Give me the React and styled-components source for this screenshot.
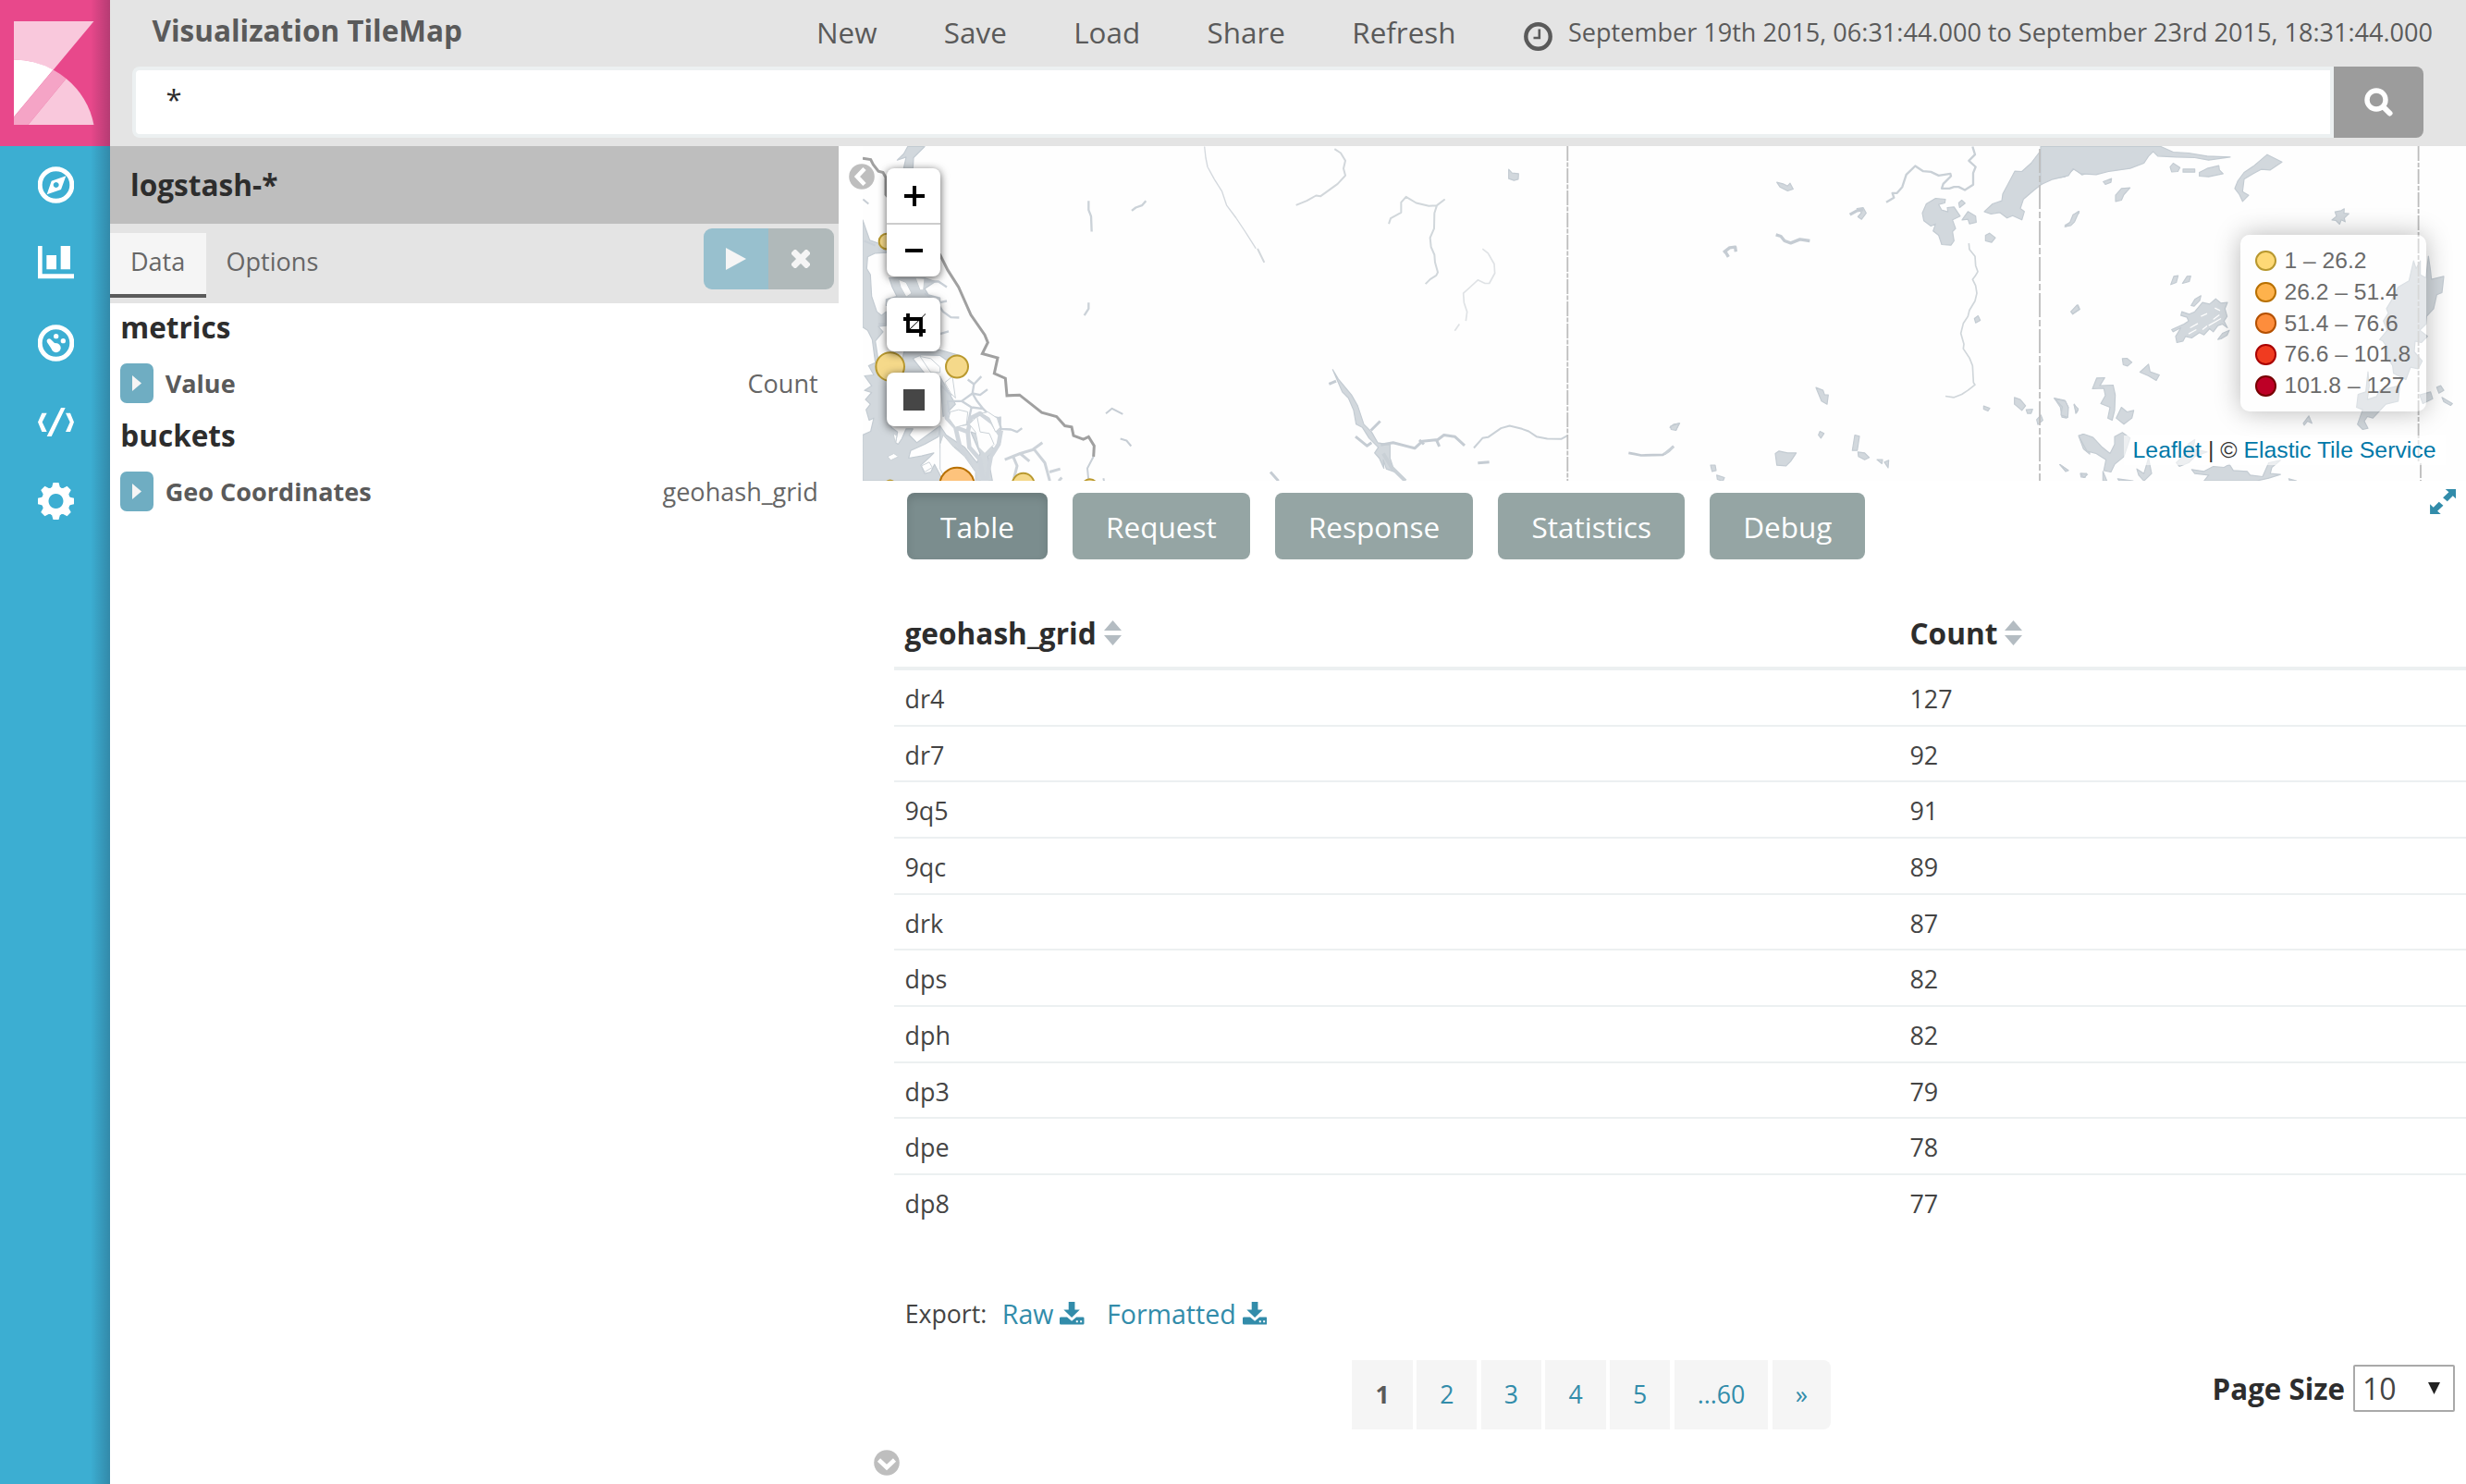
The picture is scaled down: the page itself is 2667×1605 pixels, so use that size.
import React from 'react';
import styled, { createGlobalStyle } from 'styled-components';

const Global = createGlobalStyle`
  *, *::before, *::after { box-sizing: border-box; }
  body { margin: 0; background: #fff; font-family: "Open Sans", sans-serif; color: #444; overflow: hidden; }
  button { font: inherit; border: 0; margin: 0; padding: 0; cursor: pointer; }
  a { text-decoration: none; }
  svg { display: block; flex: none; }
`;

const Page = styled.div`
  display: grid;
  grid-template-columns: 119px 1fr;
  width: 2667px;
  height: 1605px;
`;

/* ---------- global navigation ---------- */

const Nav = styled.nav`
  position: relative;
  background: #3caed2;
  &::after {
    content: "";
    position: absolute;
    inset: 0 0 0 auto;
    width: 21px;
    background: linear-gradient(to right, rgba(0, 0, 0, 0), rgba(20, 20, 40, 0.12) 50%, rgba(20, 20, 40, 0.24));
  }
`;
const LogoBox = styled.div`
  height: 157.5px;
  background: #e8488b;
`;
const NavItem = styled.a`
  display: flex;
  align-items: center;
  justify-content: center;
  height: 85.5px;
  padding-left: 2px;
`;

/* ---------- top bar ---------- */

const Main = styled.div`
  display: grid;
  grid-template-rows: 157.5px 1fr;
  min-width: 0;
`;
const Header = styled.header`
  background: #e4e4e4;
`;
const TopRow = styled.div`
  display: flex;
  align-items: center;
  height: 70px;
  padding: 0 36px 0 45.5px;
`;
const Title = styled.h1`
  margin: 0;
  padding-bottom: 4px;
  font-size: 31.5px;
  line-height: 44px;
  font-weight: 700;
  color: #5a5a5a;
`;
const Menu = styled.div`
  display: flex;
  align-items: center;
  gap: 72.4px;
  margin-left: auto;
  font-size: 31.4px;
  line-height: 44px;
  color: #5a5a5a;
`;
const TimeRange = styled.div`
  display: flex;
  align-items: center;
  gap: 17.5px;
  margin-left: 73px;
  font-size: 27.05px;
  line-height: 36px;
  color: #5a5a5a;
  svg { position: relative; top: 4px; }
`;
const SearchRow = styled.div`
  display: flex;
  height: 76.7px;
  margin: 2px 46px 0 23.6px;
`;
const SearchInput = styled.input`
  flex: 1;
  min-width: 0;
  border: 4px solid #ecf0f1;
  border-radius: 8px 0 0 8px;
  background: #fff;
  padding: 0 30px 6px 33px;
  font: 400 31px "Open Sans", sans-serif;
  color: #2d2d2d;
  outline: 0;
`;
const SearchButton = styled.button`
  display: flex;
  align-items: center;
  justify-content: center;
  width: 97px;
  border-radius: 0 8px 8px 0;
  background: #9c9c9c;
`;

/* ---------- editor sidebar ---------- */

const Body = styled.div`
  display: grid;
  grid-template-columns: 787.7px 1fr;
  min-height: 0;
`;
const IndexName = styled.div`
  display: flex;
  align-items: center;
  height: 84.5px;
  padding: 0 0 1px 22px;
  background: #bebebe;
  font-size: 31.6px;
  font-weight: 700;
  color: #2d2d2d;
`;
const TabBar = styled.div`
  display: flex;
  align-items: flex-start;
  height: 86px;
  background: #e4e4e4;
`;
const Tab = styled.a`
  height: 70px;
  margin-top: 9.5px;
  padding: 13px 22.4px 0 21.9px;
  border-bottom: 4px solid ${(p) => (p.$active ? '#5a5a5a' : 'transparent')};
  background: ${(p) => (p.$active ? '#f5f5f5' : 'transparent')};
  font-size: 27.05px;
  line-height: 36px;
  color: #666;
`;
const RunGroup = styled.div`
  display: flex;
  height: 66px;
  margin: 4.5px 5px 0 auto;
  border-radius: 9px;
  overflow: hidden;
`;
const RunButton = styled.button`
  display: flex;
  align-items: center;
  justify-content: center;
  width: 70.5px;
  background: ${(p) => p.$bg};
`;
const Aggs = styled.div`
  padding: 4.3px 22px 0 11.3px;
`;
const AggTitle = styled.h2`
  margin: 0;
  height: 44.4px;
  font-size: 31.5px;
  line-height: 44.4px;
  font-weight: 700;
  color: #2d2d2d;
`;
const AggRow = styled.div`
  display: flex;
  align-items: center;
  height: 72.4px;
  padding-top: 4px;
  font-size: 27.05px;
  color: #5a5a5a;
`;
const Expand = styled.button`
  display: flex;
  align-items: center;
  justify-content: center;
  width: 36px;
  height: 43px;
  margin-right: 12.4px;
  border-radius: 7px;
  background: #6fadc2;
`;
const AggName = styled.span`
  font-weight: 700;
`;
const AggDetail = styled.span`
  margin-left: auto;
  color: #666;
`;

/* ---------- map ---------- */

const Content = styled.main`
  position: relative;
  min-width: 0;
`;
const MapPane = styled.div`
  position: relative;
  height: 362.3px;
  margin-left: 26.3px;
  overflow: hidden;
`;
const Collapse = styled.button`
  position: absolute;
  z-index: 2;
  left: ${(p) => p.$left}px;
  top: ${(p) => p.$top}px;
  background: none;
`;
const Controls = styled.div`
  position: absolute;
  left: 25.7px;
  top: 24.8px;
  display: flex;
  flex-direction: column;
  gap: 22.4px;
`;
const ControlBox = styled.div`
  width: 58.5px;
  border-radius: 8px;
  background: #fff;
  box-shadow: 0 2px 10px rgba(0, 0, 0, 0.65);
`;
const Control = styled.button`
  display: flex;
  align-items: center;
  justify-content: center;
  width: 58.5px;
  height: 58.5px;
  padding: 1px 0 0 2px;
  background: none;
  & + & { border-top: 2px solid #ccc; padding-top: 0; }
`;
const Legend = styled.div`
  position: absolute;
  right: 43.5px;
  top: 96.5px;
  width: 200.5px;
  height: 191px;
  padding: 11.2px 16px;
  border-radius: 10px;
  background: rgba(255, 255, 255, 0.4);
  box-shadow: 0 0 28px rgba(0, 0, 0, 0.28);
  font: 24.6px "Liberation Sans", Arial, sans-serif;
  color: #6a6a6a;
`;
const LegendItem = styled.div`
  display: flex;
  align-items: center;
  gap: 9px;
  height: 33.8px;
  white-space: nowrap;
`;
const Swatch = styled.i`
  width: 22.5px;
  height: 22.5px;
  border-radius: 50%;
  border: 2px solid ${(p) => p.$line};
  background: ${(p) => p.$fill};
`;
const Attribution = styled.div`
  position: absolute;
  right: 22.5px;
  bottom: 16.5px;
  padding: 0 10px;
  background: rgba(255, 255, 255, 0.6);
  font: 24.8px/32px "Liberation Sans", Arial, sans-serif;
  color: #333;
  white-space: nowrap;
  a { color: #0078a8; }
`;
const Fullscreen = styled.a`
  position: absolute;
  right: 11px;
  top: 371.5px;
`;

/* ---------- spy panel ---------- */

const SpyModes = styled.div`
  display: flex;
  gap: 27.2px;
  padding: 13.4px 0 0 74.4px;
`;
const SpyButton = styled.button`
  height: 72.3px;
  padding: 0 36px 0.5px;
  border-radius: 8px;
  font-size: 31.5px;
  color: #fff;
  background: ${(p) => (p.$active ? '#7b8d8e' : '#95a5a4')};
  box-shadow: ${(p) => (p.$active ? 'inset 0 5px 10px rgba(0, 0, 0, 0.125)' : 'none')};
`;
const Table = styled.div`
  margin: 57px 0 0 60.8px;
`;
const Cells = styled.div`
  display: grid;
  grid-template-columns: 1087px 1fr;
  align-items: center;
  padding-left: 11px;
`;
const HeadRow = styled(Cells)`
  height: 62.4px;
  padding-bottom: 14px;
  border-bottom: 4px solid #ecf0f1;
  font-size: 31.6px;
  line-height: 44px;
  font-weight: 700;
  color: #2d2d2d;
`;
const HeadCell = styled.div`
  display: flex;
  align-items: center;
  gap: 8px;
`;
const Row = styled(Cells)`
  height: 60.7px;
  padding-top: 2.5px;
  border-bottom: 2px solid ${(p) => (p.$last ? 'transparent' : '#ecf0f1')};
  font-size: 26.9px;
  color: #444;
`;
const Export = styled.div`
  display: flex;
  align-items: center;
  height: 40px;
  margin: 68.7px 0 0 72px;
  font-size: 26.7px;
  color: #444;
`;
const ExportLink = styled.a`
  display: flex;
  align-items: center;
  gap: 7px;
  margin-left: ${(p) => p.$gap}px;
  font-size: 28.57px;
  line-height: 39px;
  color: #328caa;
`;
const Footer = styled.div`
  display: flex;
  align-items: flex-start;
  margin-top: 31px;
  padding: 0 12px 0 555.8px;
`;
const Pager = styled.div`
  display: flex;
  gap: 4.4px;
`;
const PageLink = styled.a`
  padding: 0 25px;
  height: 74.3px;
  border-radius: ${(p) => (p.$last ? '0 8px 8px 0' : '0')};
  background: #f5f5f5;
  font-size: 26.7px;
  line-height: 73px;
  font-weight: ${(p) => (p.$current ? 700 : 400)};
  color: ${(p) => (p.$current ? '#5a5a5a' : '#328caa')};
`;
const PageSize = styled.div`
  display: flex;
  align-items: center;
  gap: 9px;
  height: 51px;
  margin: 5px 0 0 auto;
  font-size: 31.3px;
  font-weight: 700;
  color: #2d2d2d;
`;
const Select = styled.div`
  display: flex;
  align-items: center;
  justify-content: space-between;
  width: 110px;
  height: 51px;
  padding: 0 14px 0 8px;
  border: 2px solid #a9a9a9;
  border-radius: 2px;
  font-size: 32px;
  font-weight: 400;
  color: #444;
`;

/* ---------- drawings ---------- */

const Logo = () => (
  <svg width="119" height="157.5" viewBox="0 0 119 157.5">
    <path fill="#f9c8dc" d="M15 23H101.5L57.5 75.8A87.5 87.5 0 0 0 15 64.6Z" />
    <path fill="#fff" d="M15 64.6A87.5 87.5 0 0 1 57.5 75.5L15 126.5Z" />
    <path fill="#f5a4c6" d="M57.5 75.5A87.5 87.5 0 0 1 71.6 85L30.5 135H15V126.5Z" />
    <path fill="#f9c8dc" d="M71.6 85A87.5 87.5 0 0 1 101.5 135H30.5Z" />
  </svg>
);

const Compass = () => (
  <svg width="39" height="40" viewBox="123 90 117 120">
    <circle cx="181.5" cy="150" r="52" fill="none" stroke="#fff" strokeWidth="15" />
    <path fill="#fff" fillRule="evenodd" d="M214 121L198 165L152 181L167 137ZM182 141a9 9 0 1 0 0.1 0Z" />
  </svg>
);
const Bars = () => (
  <svg width="39" height="40" viewBox="123 347 117 120" fill="#fff">
    <path d="M123 347h14v91h103v15H123ZM151 377h32v46h-32ZM197 347h31v76h-31Z" />
  </svg>
);
const Gauge = () => (
  <svg width="39" height="40" viewBox="123 603 117 120" fill="#fff">
    <circle cx="181.5" cy="663" r="52" fill="none" stroke="#fff" strokeWidth="15" />
    <circle cx="182" cy="641" r="8" />
    <circle cx="205" cy="656" r="8" />
    <circle cx="182" cy="679" r="15" />
    <path d="M153 661A8 8 0 0 1 164 650L177 663L190 667L168 683Z" />
  </svg>
);
const Code = () => (
  <svg width="39" height="31" viewBox="123 873 117 93" fill="#fff">
    <path d="M136 890h16l-15 29.500l15 31.500h-16l-13-31.500ZM198 873h14l-45 93h-15ZM213 890h15l12 29.500l-12 31.500h-15l14-31.500Z" />
  </svg>
);
const Gear = () => (
  <svg width="39" height="40" viewBox="-58.5 -60 117 120" fill="#fff">
    <path fillRule="evenodd" d="M0 -46a46 46 0 1 0 0.1 0ZM0 -24a24 24 0 1 1 -0.1 0Z" />
    {[0, 45, 90, 135, 180, 225, 270, 315].map((a) => (
      <path key={a} transform={`rotate(${a})`} d="M-9 -60H9L13 -46L22 -38H-22L-13 -46Z" />
    ))}
  </svg>
);
const Clock = () => (
  <svg width="31" height="31" viewBox="0 0 31 31" fill="none" stroke="#5a5a5a">
    <circle cx="15.500" cy="15.500" r="13.200" strokeWidth="4.400" />
    <path strokeWidth="2.600" d="M16.800 7.500V17H10.500" />
  </svg>
);
const Magnifier = () => (
  <svg width="31" height="31" viewBox="0 0 31 31" fill="none" stroke="#fff">
    <circle cx="13" cy="13" r="10" strokeWidth="5.400" />
    <path strokeWidth="6" strokeLinecap="round" d="M21 21L27.500 27.500" />
  </svg>
);
const Chevron = ({ down }) => (
  <svg width="28" height="28" viewBox="0 0 28 28">
    <circle cx="14" cy="14" r="13.800" fill="#bebebe" />
    <path
      transform={down ? 'rotate(-90 14 14)' : undefined}
      d="M17 5.500L9 14L17 22.500"
      fill="none"
      stroke="#fff"
      strokeWidth="4.600"
    />
  </svg>
);
const Download = () => (
  <svg width="26.500" height="24.500" viewBox="0 0 79 73" fill="#328caa">
    <path d="M29 0H49V25H65L39 51L13 25H29Z" />
    <path fillRule="evenodd" d="M4 49H24L39 62L54 49H75Q79 49 79 53V69Q79 73 75 73H4Q0 73 0 69V53Q0 49 4 49ZM53 60V66H59V60ZM66 60V66H72V60Z" />
  </svg>
);
const Sort = () => (
  <svg width="19" height="27" viewBox="0 0 19 27" fill="#b4bcc2">
    <path d="M0 11L9.500 0L19 11ZM0 16H19L9.500 27Z" />
  </svg>
);

const MAP_LINES = {
  left: [
    [4, '#d3d8dd', 'M1208 24L1212 60L1218 90L1240 130L1265 170L1280 215L1310 255L1340 300L1375 355'],
    [7, '#cbd2d8', 'M832 200L832 230L840 250L842 300M972 232L985 222L1005 215L1018 200M832 530L832 550L818 572'],
    [6, '#c6cdd4', 'M888 890L908 874L943 892M935 972L955 978L970 996M100 195L118 210'],
    [6, '#c8cfd6', 'M848 1030L828 1068L832 1109M880 1100L882 1109'],
    [7, '#cad1d8', 'M355 800L385 830L392 800M440 780L460 795L484 770M460 795L455 825L480 830L504 812M455 825L420 850L375 850L380 890L400 930L440 925L452 870L420 850M452 870L490 875L515 900L540 905L548 940L580 942L600 950L616 938M490 875L470 850L455 825M545 900L545 980L530 1010'],
    [14, '#d0d6dc', 'M365 860L372 905L400 935L440 950L445 1000L480 1040L490 1109M400 935L415 1000L450 1060L470 1109M548 945L540 990L515 1030L500 1109M440 950L450 905L480 890L520 920L545 960'],
    [9, '#cdd3d9', 'M560 1040L610 1020L650 1008L682 985M655 1006L690 1050L706 1109M705 1080L740 1070M585 1025L600 1060L590 1100M610 1020L640 1045M735 1109L745 1098'],
    [7, '#cad1d8', 'M300 462L345 462L372 480M300 500L340 530L360 560L385 578L412 579M350 530L372 525M350 632L378 624M104 330L140 345M150 600L175 600'],
  ],
  middle: [
    [6, '#d2d7db', 'M250 32L270 45L285 70L279 95L285 118L260 145L205 185L190 183L160 200L125 214M0 355L22 400'],
    [6, '#d1d7db', 'M426 275L432 257L466 238V205L482 187L515 207L556 217L582 215L608 195M582 215L574 240L573 290L560 320L563 350L574 375L576 400L585 432L580 442L560 455L545 470'],
    [5, '#dfe2e5', 'M730 356L748 370L768 405L770 435L752 468L738 468L715 457L690 480L668 500L670 530L680 560L676 590M655 600L640 622'],
    [6, '#cad1d7', 'M702 1002L730 970L748 967L790 938L818 930L858 940L880 948L905 965L940 972L985 973L1006 962'],
    [9, '#c5ccd3', 'M318 965L355 995L370 985M368 945L398 915M232 795L255 785M400 992L440 985L510 1003L535 980L585 975L605 960L640 965L672 994M525 976L540 990M580 975L590 997M715 1051L752 1048M42 1080L68 1109'],
    [8, '#c3cad1', 'M1204 1018L1225 1022L1245 1026L1315 1024L1335 1012L1350 996'],
    [12, '#c9d0d6', 'M408 1020L435 1065L480 1109'],
  ],
  east: [
    [7, '#c9d0d6', 'M1000 24L1008 50L988 70L1010 90L1002 110V148L975 165L955 155L940 155L925 160L900 160L905 145L930 120L928 112L890 118L865 106L840 104L814 87L785 115L772 155L755 175L740 175L745 190L720 205'],
    [5, '#d0d6da', 'M988 338L990 358L1008 380L1010 410L1017 430L1008 445L1000 455L1010 475L1014 500L1008 525L990 555L985 575L970 598L962 630L972 665L970 680L990 710L1000 735L1003 790L1008 797L985 815L965 828L940 838L912 834'],
    [10, '#c5ccd3', 'M362 310L378 315L390 330L410 337L440 325L472 330M192 368L212 352L230 350L232 365M195 360L208 382M602 245L625 232L645 228'],
    [9, '#cad1d7', 'M0 1022L30 997M1300 282L1322 270L1328 252L1345 236'],
  ],
};
const MAP_WATER = {
  left: [
    'M300 24H245L232 48L211 68L240 58L232 95H262L264 60Z',
    'M99 262L112 300L122 328L150 338L180 368L140 370L115 382L112 420L124 440L128 510L145 560L160 572L175 560V605L150 608L165 625L140 655L150 720L175 780L205 805L185 860L192 935L212 950L206 985L214 990L226 972L240 940L262 940L250 960L275 985L350 930L345 965L300 990L255 1010L248 1035L290 1028L330 1018L318 1030L288 1058L300 1085L320 1080L332 1055L360 1109H99V960L125 948L135 905L120 912L110 878L124 860L108 845L128 822L105 815L128 800L105 768L135 765L118 735L140 725L130 650L115 620L99 610Z',
    'M185 450H300L335 462L300 485L312 505L350 515V540H175V520L210 510L195 480Z',
    'M235 684H350L415 702L420 712L370 716L350 702L290 700L262 712L300 760H215Z',
    'M350 770L400 860L360 900Z',
    'M350 930L370 960L400 980L430 1000L470 1050L480 1020L450 950L480 960L530 1010L505 1030L520 1109H460L440 1040L400 1000L350 1000Z',
  ],
  middle: [
    'M244 748L262 778L305 830L325 865L345 925L370 950L390 985L430 992L430 1035L445 1080L418 1070L408 1040L410 1068L395 1035L380 1018L392 1000L362 970L340 935L320 925L312 880L295 840L275 820Z',
    'M815 98L826 110L847 112L846 130L832 134L815 128Z',
    'M1338 935L1350 925L1370 922L1358 943Z',
  ],
  east: [
    'M1380 24H1246L1215 45L1190 78L1160 105L1137 104L1118 140L1098 178L1095 200L1065 210L1038 235L1060 243L1088 238L1112 256L1130 248L1160 262L1168 235L1155 225L1165 195L1200 165L1245 130L1300 122L1330 96L1355 116L1380 108Z',
    'M837 240L850 210L880 192L912 195L910 207L890 212L900 230L920 236L918 222L940 220L960 250L935 262L945 290L935 300L940 330L930 344L900 342L890 312L872 298L880 275L865 282L842 265Z',
    'M955 207L965 198L976 208L958 222ZM966 262L985 235L1010 250L1012 270L990 275L985 260ZM1042 312L1055 305L1074 320L1062 335L1042 330Z',
    'M365 140L385 145L400 152L408 143L418 162L400 168L375 155ZM625 225L645 222L655 240L640 260L628 252L640 238Z',
    'M492 806L515 815L520 830L532 830L528 860L510 850ZM500 960L505 948L518 955L508 970ZM618 960L633 964L626 1010L610 1010ZM628 1015L650 1018L665 1033L650 1040L630 1030ZM690 1040L708 1040L706 1053ZM714 1048L728 1042L726 1066Z',
    'M360 1020L372 1012L400 1018L428 1018L410 1045L395 1060L365 1058ZM20 932L48 922L38 945L22 942ZM150 1058L165 1058L168 1075L155 1078ZM170 1090L195 1098L190 1110L172 1104Z',
    'M1006 582L1018 573L1025 588L1010 596ZM1036 866L1056 873L1050 882L1036 876ZM1136 838L1155 845L1172 865L1160 880L1136 860ZM1174 878L1195 876L1190 890L1178 890ZM1208 910L1222 895L1228 912L1212 926Z',
    'M1320 560L1342 538L1348 552L1325 568ZM1265 840L1300 848L1310 870L1305 905L1290 902L1285 870ZM1330 860L1342 880L1335 890ZM1345 965L1358 957L1380 970V1022L1360 1005ZM1284 1056L1310 1075L1302 1078ZM1350 1085L1370 1085L1365 1098L1352 1096Z',
  ],
  coast: [
    'M0 24H390L430 42L480 45L540 55L615 58L545 68L500 60L440 58L380 55L365 40L350 55L335 78L290 95L220 105L180 115L130 112L105 96L90 118L40 130L0 148Z',
    'M420 90L430 78L452 92L445 105L425 106ZM462 97H500V107H462ZM515 108L540 95L578 86L580 100L592 112L545 122L515 120Z',
    'M690 88L735 50L783 74L745 100L715 98L690 112L660 130L655 170L675 182L655 202L645 180L630 160L640 135L660 108Z',
    'M203 138L230 128L228 140L210 147ZM243 182L262 160L290 158L270 180L262 198L243 202ZM78 284L95 270L105 245L125 234L110 268L98 280Z',
    'M945 262L960 250L955 236L975 232L985 226L984 240L1000 242L985 256L988 268L975 262L970 276L958 264Z',
    'M98 560L118 538L125 552L104 566ZM422 472L432 445L446 443L440 465ZM460 468L475 445L487 444L482 462ZM488 540L500 520L520 508L516 524L498 542Z',
    'M265 712L280 711L296 724L282 736L268 732ZM322 756L350 730L355 755L385 765L375 783L350 768ZM168 810L182 775L208 774L192 800L235 798L242 830L240 880L232 912L218 905L225 870L195 858L210 832L205 808ZM245 905L262 870L280 885L302 880L296 905L270 925Z',
    'M45 842L80 850L90 870L88 903L66 895L70 868ZM108 862L122 875L116 888ZM123 962L140 957L170 968L200 1000L225 1020L240 990L240 965L265 952L290 970L270 1030L240 1055L228 1080L205 1075L212 1040L180 1020L150 1012Z',
    'M62 1056L90 1075L82 1078ZM130 1085L152 1088L140 1098ZM202 1078L215 1109H202ZM250 1102L300 1109H255ZM312 1070L335 1085L350 1035L360 1085L335 1109L318 1090ZM440 1050L475 1015L478 990L500 975L495 1005L540 1015L500 1030L480 1050L450 1062Z',
    'M490 1072L530 1078L560 1062L595 1065L612 1055L625 1075L670 1078L680 1090L720 1095L740 1050L778 1042L750 1065L745 1085L778 1088L740 1100L700 1109H530L545 1090L500 1085ZM805 1102L830 1109H808Z',
    'M852 922L870 898L880 922L866 915L855 928ZM1285 805L1298 800L1308 815L1292 824ZM1302 838L1336 858L1330 864L1308 852Z',
    'M1210 395L1218 420L1232 395L1232 440L1250 450L1258 380L1264 420L1268 455L1308 445L1302 498L1285 505L1275 550L1252 575L1250 600L1230 620L1255 640L1235 660L1215 655L1212 690L1238 720L1225 745L1200 740L1185 780L1145 760L1142 735L1125 710L1128 680L1110 655L1100 650L1125 620L1112 590L1128 565L1122 550L1140 520L1160 480L1195 460Z',
    'M1230 830L1265 820L1272 842L1240 858ZM1062 755L1066 800L1060 845L1090 835L1100 815L1165 800L1160 850L1120 860L1078 905L1060 900L1050 915L1062 938L1045 942L1028 925L1045 878L1025 870L1030 828L1055 820Z',
    'M438 640L455 612L430 625L425 618L465 600L480 590L475 578L455 572L458 560L482 568L500 560L525 530L548 535L568 518L585 532L606 530L598 550L605 575L595 590L606 612L590 600L575 605L560 625L548 615L530 635L515 628L490 645L470 640L462 655L442 660ZM575 650L590 630L612 620L605 636L585 648Z',
  ],
};
const MAP_ISLANDS = [
  'M383 885L410 878L440 885L436 925L400 935L378 905Z',
  'M445 925L465 950L475 1000L495 1020L525 990L510 955L480 950L470 900Z',
  'M360 960L395 1000L430 1030L465 1080L465 1109H372L350 1070L350 990Z',
  'M180 1030L200 1020L215 1030L190 1042ZM290 1060L315 1048L325 1065L300 1080ZM198 955L210 962L205 985Z',
  'M365 790L390 770L400 840L385 825ZM485 890L510 905L530 950L545 935L535 905L505 885Z',
  'M215 455L240 465L258 500L240 512L222 480ZM270 450L300 452L296 490L285 490Z',
  'M285 705L320 712L350 740V757H320Z',
];

const DOTS = [
  [177, 332, 25], [188, 738, 46], [405, 738, 36], [620, 1120, 36], [836, 1128, 25], [188, 1124, 17],
];

const Region = ({ x, name }) => (
  <g transform={`translate(${x} -7.5) scale(0.33333)`}>
    {(MAP_WATER[name] || []).map((d) => (
      <path key={d} d={d} fill="#d2d8dd" stroke="#c3cbd2" strokeWidth="3.500" strokeLinejoin="round" />
    ))}
    {(MAP_LINES[name] || []).map(([w, c, d]) => (
      <path key={d} d={d} fill="none" stroke={c} strokeWidth={w} strokeLinejoin="round" />
    ))}
  </g>
);

const TileMap = () => (
  <svg width="1734" height="362.300" viewBox="0 0 1734 362.300">
    <rect width="1734" height="362.300" fill="#fefefe" />
    <Region x={-33} name="left" />
    <Region x={427} name="middle" />
    <Region x={867} name="east" />
    <Region x={1274} name="coast" />
    <path
      transform="translate(1274 -7.5) scale(0.33333)"
      d="M485 612L510 598M520 575L540 566M545 605L585 582M560 585L580 570M480 632L505 618M565 548L582 556M525 618L540 606"
      stroke="#fdfdfd"
      strokeWidth="4"
    />
    <g stroke="#bdbdbd" strokeWidth="1.800" strokeDasharray="26 3 7 3">
      <path d="M762.300 0V362" strokeDasharray="16 1.500 5 1.500" />
      <path d="M1273 3V362" />
      <path d="M1682.600 0V343M1685 343V362" strokeDasharray="16 2 5 2" />
    </g>
    <g transform="translate(-33 -7.500) scale(0.33333)">
      {MAP_ISLANDS.map((d) => (
        <path key={d} d={d} fill="#fefefe" stroke="#cbd2d7" strokeWidth="3" />
      ))}
      <path
        d="M99 62L125 66L133 82L150 104L165 108L174 125V180L350 375L375 425L410 480L450 570L495 635L505 660L487 696L537 710L526 760L562 776L567 832L608 830L680 887L728 900L755 930L777 934L783 962L815 974L832 966L850 995L848 1030"
        fill="none"
        stroke="#a0a0a0"
        strokeWidth="9"
      />
      {DOTS.map(([cx, cy, r]) => (
        <circle key={`${cx}-${cy}`} cx={cx} cy={cy} r={r} fill="#f5d98a" stroke="#b9992f" strokeWidth="6" />
      ))}
      <circle cx="405" cy="1122" r="56" fill="#fdc37c" stroke="#b87000" strokeWidth="6" />
    </g>
  </svg>
);

/* ---------- data ---------- */

const NAV = [Compass, Bars, Gauge, Code, Gear];
const ROWS = [
  ['dr4', 127], ['dr7', 92], ['9q5', 91], ['9qc', 89], ['drk', 87],
  ['dps', 82], ['dph', 82], ['dp3', 79], ['dpe', 78], ['dp8', 77],
];
const LEGEND = [
  ['1 – 26.2', '#fed976', '#b8982f'],
  ['26.2 – 51.4', '#feb24c', '#b87000'],
  ['51.4 – 76.6', '#fd8d3c', '#b45000'],
  ['76.6 – 101.8', '#f03b20', '#a80000'],
  ['101.8 – 127', '#bd0026', '#760000'],
];
const PAGES = ['1', '2', '3', '4', '5', '...60', '»'];

const Agg = ({ title, name, detail }) => (
  <section>
    <AggTitle>{title}</AggTitle>
    <AggRow>
      <Expand>
        <svg width="10" height="17" viewBox="0 0 10 17"><path d="M0 0L10 8.500L0 17Z" fill="#f5f5f5" /></svg>
      </Expand>
      <AggName>{name}</AggName>
      <AggDetail>{detail}</AggDetail>
    </AggRow>
  </section>
);

export default function App() {
  return (
    <Page>
      <Global />
      <Nav>
        <LogoBox><Logo /></LogoBox>
        {NAV.map((Icon, i) => (
          <NavItem key={i}><Icon /></NavItem>
        ))}
      </Nav>
      <Main>
        <Header>
          <TopRow>
            <Title>Visualization TileMap</Title>
            <Menu>
              {['New', 'Save', 'Load', 'Share', 'Refresh'].map((m) => <span key={m}>{m}</span>)}
            </Menu>
            <TimeRange>
              <Clock />
              <span>September 19th 2015, 06:31:44.000 to September 23rd 2015, 18:31:44.000</span>
            </TimeRange>
          </TopRow>
          <SearchRow>
            <SearchInput defaultValue="*" />
            <SearchButton><Magnifier /></SearchButton>
          </SearchRow>
        </Header>
        <Body>
          <aside>
            <IndexName>logstash-*</IndexName>
            <TabBar>
              <Tab $active>Data</Tab>
              <Tab>Options</Tab>
              <RunGroup>
                <RunButton $bg="#98c0ce">
                  <svg width="22" height="24" viewBox="0 0 22 24"><path d="M0 0L22 12L0 24Z" fill="#f5f5f5" /></svg>
                </RunButton>
                <RunButton $bg="#b0b9ba">
                  <svg width="20" height="20" viewBox="0 0 20 20">
                    <path d="M4 4L16 16M16 4L4 16" stroke="#f5f5f5" strokeWidth="7" strokeLinecap="square" />
                  </svg>
                </RunButton>
              </RunGroup>
            </TabBar>
            <Aggs>
              <Agg title="metrics" name="Value" detail="Count" />
              <Agg title="buckets" name="Geo Coordinates" detail="geohash_grid" />
            </Aggs>
          </aside>
          <Content>
            <Collapse $left={11} $top={19.5}><Chevron /></Collapse>
            <MapPane>
              <TileMap />
              <Controls>
                <ControlBox>
                  <Control>
                    <svg width="22" height="22" viewBox="0 0 22 22"><path d="M9 0H13V9H22V13H13V22H9V13H0V9H9Z" /></svg>
                  </Control>
                  <Control>
                    <svg width="19" height="4" viewBox="0 0 19 4"><path d="M0 0H19V4H0Z" /></svg>
                  </Control>
                </ControlBox>
                <ControlBox>
                  <Control>
                    <svg width="24" height="25" viewBox="0 0 24 25" fill="none" stroke="#000">
                      <path strokeWidth="3.800" d="M0 6H19V25M5 0V19H24" />
                      <path strokeWidth="1" d="M5 19L24 0.500" />
                    </svg>
                  </Control>
                </ControlBox>
                <ControlBox>
                  <Control>
                    <svg width="23" height="23" viewBox="0 0 23 23"><path d="M0 0H23V23H0Z" fill="#464646" /></svg>
                  </Control>
                </ControlBox>
              </Controls>
              <Legend>
                {LEGEND.map(([label, fill, line]) => (
                  <LegendItem key={label}><Swatch $fill={fill} $line={line} />{label}</LegendItem>
                ))}
              </Legend>
              <Attribution><a>Leaflet</a> | © <a>Elastic Tile Service</a></Attribution>
            </MapPane>
            <Fullscreen>
              <svg width="28.500" height="27" viewBox="0 0 85 81" fill="#328caa">
                <path d="M50 0H85V32L74 22L56 40L42 28L61 10ZM35 81H0V49L11 59L29 41L43 53L24 71Z" />
              </svg>
            </Fullscreen>
            <SpyModes>
              {['Table', 'Request', 'Response', 'Statistics', 'Debug'].map((m, i) => (
                <SpyButton key={m} $active={i === 0}>{m}</SpyButton>
              ))}
            </SpyModes>
            <Table>
              <HeadRow>
                <HeadCell>geohash_grid<Sort /></HeadCell>
                <HeadCell>Count<Sort /></HeadCell>
              </HeadRow>
              {ROWS.map(([k, v], i) => (
                <Row key={k} $last={i === ROWS.length - 1}><span>{k}</span><span>{v}</span></Row>
              ))}
            </Table>
            <Export>
              Export:
              <ExportLink $gap={16.5}>Raw<Download /></ExportLink>
              <ExportLink $gap={24}>Formatted<Download /></ExportLink>
            </Export>
            <Footer>
              <Pager>
                {PAGES.map((p, i) => (
                  <PageLink key={p} $current={i === 0} $last={i === PAGES.length - 1}>{p}</PageLink>
                ))}
              </Pager>
              <PageSize>
                Page Size
                <Select>
                  10
                  <svg width="13" height="13" viewBox="0 0 13 13"><path d="M0 0H13L6.500 13Z" fill="#222" /></svg>
                </Select>
              </PageSize>
            </Footer>
            <Collapse $left={38} $top={1410}><Chevron down /></Collapse>
          </Content>
        </Body>
      </Main>
    </Page>
  );
}
